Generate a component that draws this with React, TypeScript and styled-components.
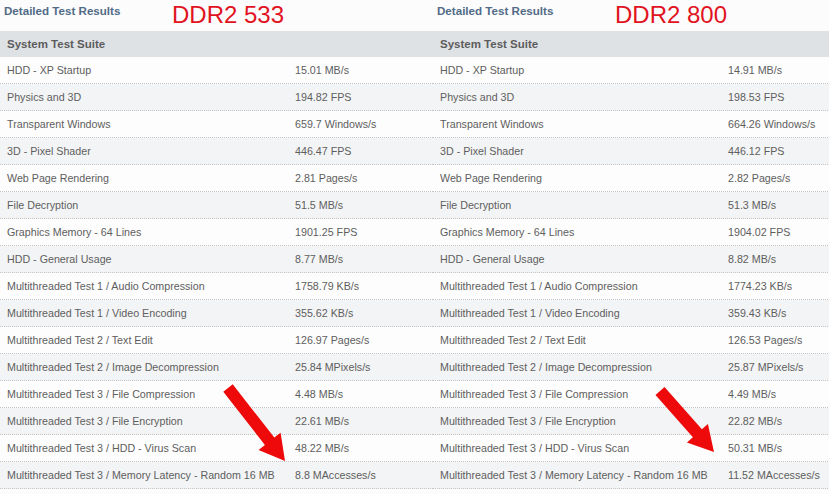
import React from "react";
import styled, { createGlobalStyle } from "styled-components";

const Global = createGlobalStyle`
  html, body { margin: 0; padding: 0; background: #fcfcfc; }
  body { font-family: "Liberation Sans", Arial, sans-serif; }
`;

const Page = styled.div`
  position: relative;
  width: 829px;
  height: 494px;
  overflow: hidden;
  display: flex;
  background: #fcfcfc;
`;

const Panel = styled.div`
  flex: 0 0 433px;
  width: 433px;
  display: flex;
  flex-direction: column;
`;

const TitleBar = styled.div`
  height: 31px;
  display: flex;
  align-items: flex-start;
  padding-left: 4px;
  box-sizing: border-box;
`;

const Title = styled.div`
  margin-top: 4px;
  font-size: 11.6px;
  font-weight: bold;
  color: #516b87;
  width: 120px;
  white-space: nowrap;
`;

const Tag = styled.div<{ $offset: number }>`
  margin-left: ${(p) => p.$offset}px;
  margin-top: 2px;
  font-size: 24px;
  line-height: 26px;
  color: #e1131f;
`;

const HeaderRow = styled.div`
  height: 26px;
  background: #dfe2e5;
  display: flex;
  align-items: center;
  padding-left: 7px;
  font-size: 11.5px;
  font-weight: bold;
  color: #5c5c5c;
`;

const Row = styled.div<{ $alt: boolean }>`
  height: 26px;
  display: grid;
  grid-template-columns: 288px 1fr;
  align-items: center;
  padding-left: 7px;
  font-size: 10.7px;
  color: #5e5e5e;
  white-space: nowrap;
  background: ${(p) => (p.$alt ? "#f3f4f5" : "#fdfdfd")};
  border-bottom: 1px dotted #c4c4c4;
`;

const Arrow = styled.svg`
  position: absolute;
  overflow: visible;
  left: 0;
  top: 0;
`;

const labels = [
  "HDD - XP Startup",
  "Physics and 3D",
  "Transparent Windows",
  "3D - Pixel Shader",
  "Web Page Rendering",
  "File Decryption",
  "Graphics Memory - 64 Lines",
  "HDD - General Usage",
  "Multithreaded Test 1 / Audio Compression",
  "Multithreaded Test 1 / Video Encoding",
  "Multithreaded Test 2 / Text Edit",
  "Multithreaded Test 2 / Image Decompression",
  "Multithreaded Test 3 / File Compression",
  "Multithreaded Test 3 / File Encryption",
  "Multithreaded Test 3 / HDD - Virus Scan",
  "Multithreaded Test 3 / Memory Latency - Random 16 MB",
];

const v533 = [
  "15.01 MB/s",
  "194.82 FPS",
  "659.7 Windows/s",
  "446.47 FPS",
  "2.81 Pages/s",
  "51.5 MB/s",
  "1901.25 FPS",
  "8.77 MB/s",
  "1758.79 KB/s",
  "355.62 KB/s",
  "126.97 Pages/s",
  "25.84 MPixels/s",
  "4.48 MB/s",
  "22.61 MB/s",
  "48.22 MB/s",
  "8.8 MAccesses/s",
];

const v800 = [
  "14.91 MB/s",
  "198.53 FPS",
  "664.26 Windows/s",
  "446.12 FPS",
  "2.82 Pages/s",
  "51.3 MB/s",
  "1904.02 FPS",
  "8.82 MB/s",
  "1774.23 KB/s",
  "359.43 KB/s",
  "126.53 Pages/s",
  "25.87 MPixels/s",
  "4.49 MB/s",
  "22.82 MB/s",
  "50.31 MB/s",
  "11.52 MAccesses/s",
];

function arrowPoints(x1: number, y1: number, x2: number, y2: number) {
  const dx = x2 - x1;
  const dy = y2 - y1;
  const len = Math.hypot(dx, dy);
  const ux = dx / len;
  const uy = dy / len;
  const nx = -uy;
  const ny = ux;
  const shaft = 6;
  const head = 14;
  const headLen = 25;
  const bx = x2 - ux * headLen;
  const by = y2 - uy * headLen;
  const pts = [
    [x1 + nx * shaft, y1 + ny * shaft],
    [bx + nx * shaft, by + ny * shaft],
    [bx + nx * head, by + ny * head],
    [x2, y2],
    [bx - nx * head, by - ny * head],
    [bx - nx * shaft, by - ny * shaft],
    [x1 - nx * shaft, y1 - ny * shaft],
  ];
  return pts.map((p) => p.map((n) => n.toFixed(1)).join(",")).join(" ");
}

const Table: React.FC<{ tag: string; offset: number; values: string[] }> = ({ tag, offset, values }) => (
  <Panel>
    <TitleBar>
      <Title>Detailed Test Results</Title>
      <Tag $offset={offset}>{tag}</Tag>
    </TitleBar>
    <HeaderRow>System Test Suite</HeaderRow>
    {labels.map((l, i) => (
      <Row key={l} $alt={i % 2 === 1}>
        <span>{l}</span>
        <span>{values[i]}</span>
      </Row>
    ))}
  </Panel>
);

export default function App() {
  return (
    <>
      <Global />
      <Page>
        <Table tag="DDR2 533" offset={48} values={v533} />
        <Table tag="DDR2 800" offset={58} values={v800} />
        <Arrow width="829" height="494">
          <polygon points={arrowPoints(228, 388, 285, 461)} fill="#ee0a0a" />
          <polygon points={arrowPoints(660, 391, 714, 452)} fill="#ee0a0a" />
        </Arrow>
      </Page>
    </>
  );
}
